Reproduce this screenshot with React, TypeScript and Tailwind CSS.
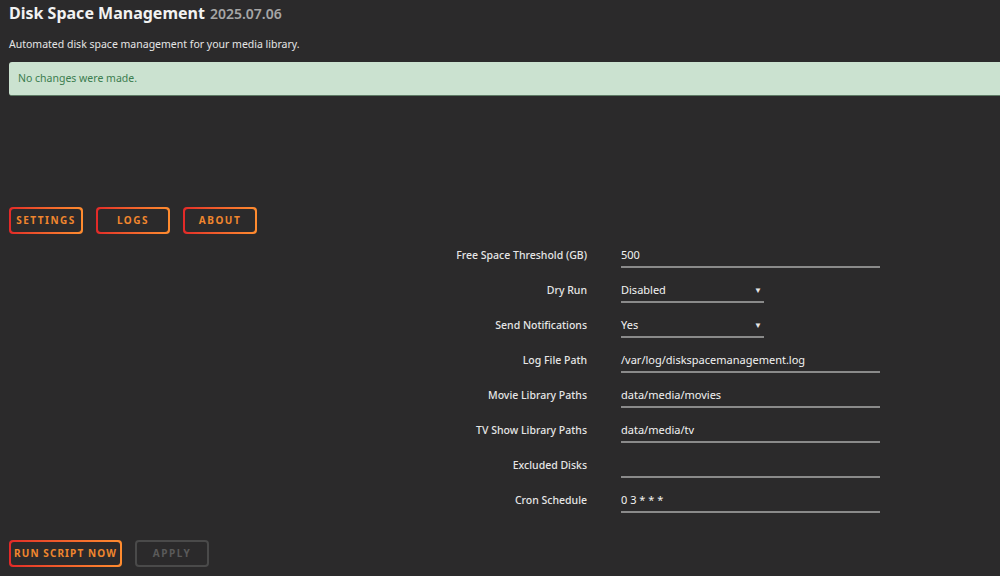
import React from "react";

const FONT = { fontFamily: '"Noto Sans", "Open Sans", Arial, sans-serif' };

function GradButton({ label, wide }: { label: string; wide?: boolean }) {
  return (
    <div className={`rounded-[4px] bg-gradient-to-r from-[#e22828] to-[#ff8c2f] p-[2px] ${wide ? "w-[113px]" : "w-[74px]"} h-[27px]`}>
      <div
        className={`flex h-full w-full items-center justify-center rounded-[3px] bg-[#2b2a2b] pt-[1px] text-[10px] font-bold text-[#f0862e] ${
          wide ? "tracking-[0.11em]" : "tracking-[0.15em]"
        }`}
      >
        {label}
      </div>
    </div>
  );
}

type Field = { label: string; value: string; select?: boolean };

const fields: Field[] = [
  { label: "Free Space Threshold (GB)", value: "500" },
  { label: "Dry Run", value: "Disabled", select: true },
  { label: "Send Notifications", value: "Yes", select: true },
  { label: "Log File Path", value: "/var/log/diskspacemanagement.log" },
  { label: "Movie Library Paths", value: "data/media/movies" },
  { label: "TV Show Library Paths", value: "data/media/tv" },
  { label: "Excluded Disks", value: "" },
  { label: "Cron Schedule", value: "0 3 * * *" },
];

export default function App() {
  return (
    <div className="h-[576px] w-[1000px] overflow-hidden bg-[#2b2a2b] pl-[9px] text-[#e6e6e6]" style={FONT}>
      {/* header */}
      <div className="flex items-baseline gap-[5px] pt-[1px]">
        <h1 className="text-[16px] font-bold text-[#f2f2f2]">Disk Space Management</h1>
        <span className="text-[14px] font-semibold text-[#a6a6a6]">2025.07.06</span>
      </div>
      <p className="mt-[12px] text-[10.5px] text-[#e6e6e6]">Automated disk space management for your media library.</p>

      <div className="mt-[9px] flex h-[34px] items-center rounded-l-[3px] border-b border-[#5d7a64] bg-[#cbe2d0] pl-[9px] pt-[1px] text-[10.5px] text-[#3b7d4f]">
        No changes were made.
      </div>

      {/* tabs */}
      <div className="mt-[111px] flex gap-[13px]">
        <GradButton label="SETTINGS" />
        <GradButton label="LOGS" />
        <GradButton label="ABOUT" />
      </div>

      {/* form */}
      <div className="mt-[10px] flex flex-col gap-[11px]">
        {fields.map((f) => (
          <div key={f.label} className="flex h-[24px] items-center">
            <div className="w-[578px] text-right text-[10.5px] font-medium text-[#e6e6e6]">{f.label}</div>
            <div
              className={`ml-[34px] flex h-[24px] items-center justify-between border-b-2 border-[#8a8a8a] text-[11px] text-[#f2f2f2] ${
                f.select ? "w-[143px]" : "w-[259px]"
              }`}
            >
              <span>{f.value}</span>
              {f.select && <span className="mr-[2px] text-[8px] text-[#e6e6e6]">▼</span>}
            </div>
          </div>
        ))}
      </div>

      {/* actions */}
      <div className="mt-[27px] flex gap-[13px]">
        <GradButton label="RUN SCRIPT NOW" wide />
        <div className="flex h-[27px] w-[74px] items-center justify-center rounded-[4px] border-2 border-[#4a4a4a] pt-[1px] text-[10px] font-bold tracking-[0.15em] text-[#5a5a5a]">
          APPLY
        </div>
      </div>
    </div>
  );
}
